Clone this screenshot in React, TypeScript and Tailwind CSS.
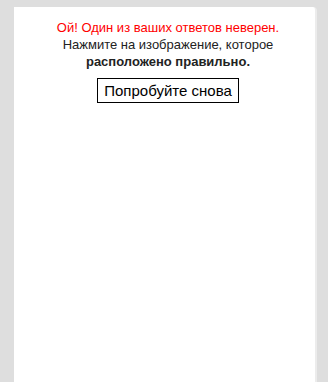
export default function App() {
  return (
    <div className="min-h-[382px] bg-[#dedede] pl-[14px] pt-[7px] font-['Liberation_Sans',Arial,sans-serif]">
      <div className="w-[303px] h-[375px] bg-white rounded-tr-[4px] border-r-2 border-[#ececec] pt-[12px] pl-[7px] text-center">
        <div className="text-[13px] leading-[17px] text-[#ff0000]">Ой! Один из ваших ответов неверен.</div>
        <div className="text-[13px] leading-[17px] text-[#222]">Нажмите на изображение, которое</div>
        <div className="text-[13px] leading-[17px] text-[#222] font-bold">расположено правильно.</div>
        <button className="mt-[8px] border border-black px-[6px] h-[25px] text-[15px] leading-[20px] text-black bg-white">
          Попробуйте снова
        </button>
      </div>
    </div>
  )
}
